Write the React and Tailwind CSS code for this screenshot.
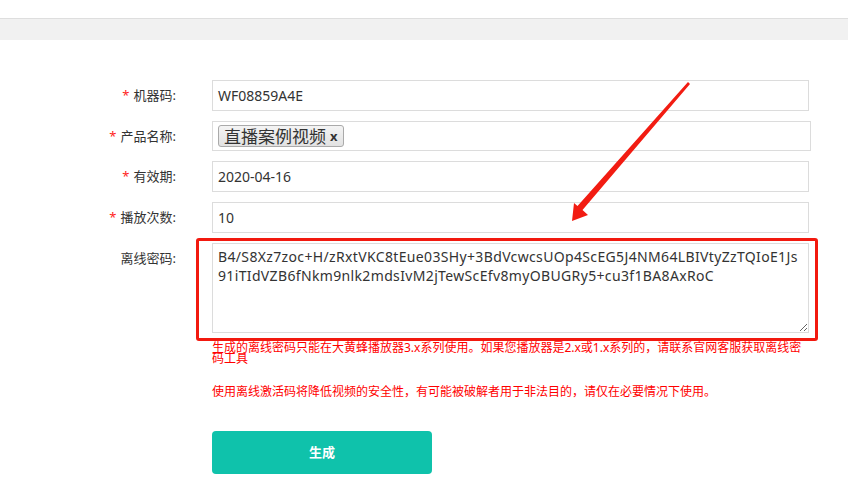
import React from 'react';

const rows = [
    { label: '机器码', value: 'WF08859A4E', required: true },
    { label: '产品名称', tag: '直播案例视频', required: true },
    { label: '有效期', value: '2020-04-16', required: true },
    { label: '播放次数', value: '10', required: true },
];

const code =
    'B4/S8Xz7zoc+H/zRxtVKC8tEue03SHy+3BdVcwcsUOp4ScEG5J4NM64LBIVtyZzTQIoE1Js\n91iTIdVZB6fNkm9nlk2mdsIvM2jTewScEfv8myOBUGRy5+cu3f1BA8AxRoC';

const Label = ({ text, required }) => (
    <div className="w-[176px] shrink-0 text-right text-[13px] text-[#333] leading-none">
        {required && <span className="text-[#f22] mr-[4px]">*</span>}
        {text}:
    </div>
);

const App = () => {
    return (
        <div
            className="relative w-full h-[491px] bg-white overflow-hidden"
            style={{ fontFamily: '"Noto Sans", "Noto Sans CJK SC", sans-serif' }}
        >
            <div className="h-[19px] border-b border-[#dedede]" />
            <div className="h-[21px] bg-[#f1f1f1]" />

            <div className="pt-[40px] flex flex-col gap-[10px]">
                {rows.map((row) => (
                    <div key={row.label} className="flex items-center">
                        <Label text={row.label} required={row.required} />
                        {row.tag ? (
                            <div className="ml-[36px] w-[599px] h-[30px] border border-[#dcdcdc] flex items-center px-[5px]">
                                <span className="flex items-center h-[22px] px-[5px] border border-[#aaa] rounded-[3px] bg-gradient-to-b from-[#f4f4f4] to-[#e2e2e2] text-[17px] text-[#333] leading-none">
                                    直播案例视频
                                    <span className="ml-[4px] text-[13px] font-bold text-[#333]">x</span>
                                </span>
                            </div>
                        ) : (
                            <div className="ml-[36px] w-[597px] h-[31px] border border-[#dcdcdc] flex items-center px-[5px] text-[14px] text-[#333]">
                                {row.value}
                            </div>
                        )}
                    </div>
                ))}

                <div className="flex items-start">
                    <div className="pt-[9px]">
                        <Label text="离线密码" />
                    </div>
                    <div className="relative ml-[36px] w-[597px]">
                        <textarea
                            readOnly
                            value={code}
                            className="block w-[597px] h-[90px] border border-[#dcdcdc] px-[5px] py-[3px] text-[14px] leading-[19px] tracking-[0.35px] text-[#333] outline-none resize-y whitespace-pre-wrap"
                            style={{ fontFamily: '"Noto Sans", "Noto Sans CJK SC", sans-serif' }}
                        />
                        <div className="absolute -left-[16px] -top-[5px] -right-[9px] -bottom-[8px] border-[3px] border-[#f2190f] rounded-[3px] pointer-events-none" />
                    </div>
                </div>
            </div>

            <div className="ml-[212px] w-[600px] mt-[9px] text-[12px] leading-[11px] text-[#f00]">
                生成的离线密码只能在大黄蜂播放器3.x系列使用。如果您播放器是2.x或1.x系列的，请联系官网客服获取离线密码工具
            </div>
            <div className="ml-[212px] mt-[21px] text-[12px] leading-[14px] text-[#f00]">
                使用离线激活码将降低视频的安全性，有可能被破解者用于非法目的，请仅在必要情况下使用。
            </div>

            <button className="ml-[212px] mt-[32px] w-[220px] h-[43px] rounded-[4px] bg-[#0fc2ab] text-white text-[13px] font-bold">
                生成
            </button>

            <svg className="absolute left-0 top-0 pointer-events-none" width="848" height="491">
                <polygon
                    points="572,221 588,215 582.5,210 690,84 688,82 577.5,206 574,203"
                    fill="#f21c12"
                />
            </svg>
        </div>
    );
};

export default App;
